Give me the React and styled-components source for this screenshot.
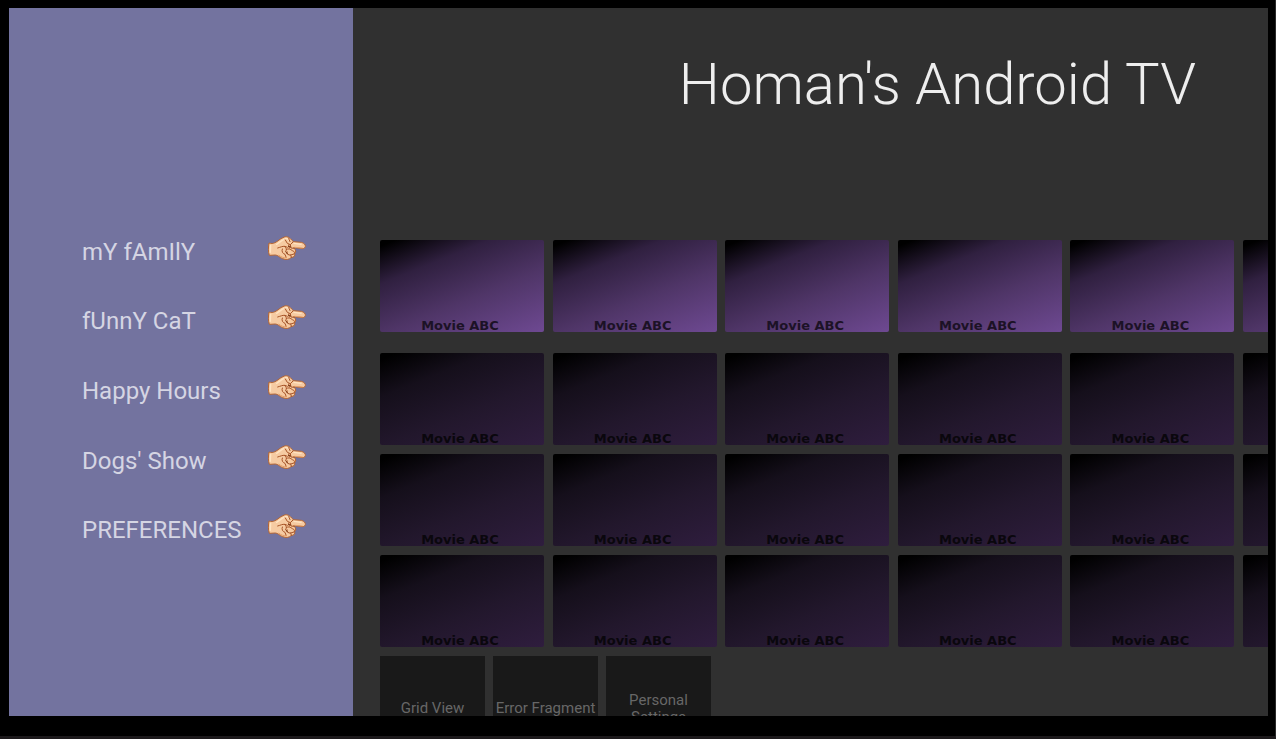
import React from "react";
import styled, { createGlobalStyle } from "styled-components";

const GlobalStyle = createGlobalStyle`
  *, *::before, *::after { box-sizing: border-box; }
  body {
    margin: 0;
    background: #000;
    font-family: Roboto, "Liberation Sans", sans-serif;
  }
`;

const Bezel = styled.div`
  display: flex;
  height: 100vh;
  padding: 8px 7px 20px 9px;
  background: #000;
  border-right: 1px solid #2a2a2a;
  border-bottom: 3px solid #1c191b;
`;

const Screen = styled.div`
  flex: 1;
  min-width: 0;
  display: flex;
  overflow: hidden;
  background: #303030;
`;

const Sidebar = styled.nav`
  flex: none;
  width: 344px;
  padding: 209px 47px 0 73px;
  background: #73739f;
`;

const Menu = styled.ul`
  display: grid;
  grid-auto-rows: 1fr;
  height: 348px;
  margin: 0;
  padding: 0;
  list-style: none;
`;

const MenuItem = styled.li`
  display: flex;
`;

const MenuButton = styled.button`
  flex: 1;
  display: flex;
  align-items: center;
  justify-content: space-between;
  padding: 0;
  border: 0;
  background: none;
  color: #d5d5e3;
  font: 400 24px/32px Roboto, "Liberation Sans", sans-serif;
  text-align: left;
  white-space: nowrap;
  cursor: pointer;
`;

const HandIcon = styled.svg`
  flex: none;
  width: 38px;
  height: 24px;
  margin-bottom: 8px;
`;

const Browse = styled.main`
  flex: 1;
  min-width: 0;
  overflow: hidden;
  padding-left: 27px;
`;

const Header = styled.header`
  height: 232px;
  padding: 40px 72px 0 0;
`;

const Title = styled.h1`
  margin: 0;
  color: #eee;
  font-size: 58px;
  font-weight: 300;
  line-height: 72px;
  text-align: right;
  white-space: nowrap;
`;

const MovieRow = styled.section`
  display: flex;
  justify-content: space-between;
  width: 1027px;
  margin-bottom: ${(p) => (p.$active ? 21 : 9)}px;
`;

const MovieCard = styled.button`
  flex: none;
  display: flex;
  align-items: flex-end;
  justify-content: center;
  width: 164px;
  height: 92px;
  padding: 0 4px 0 0;
  border: 0;
  border-radius: 2px;
  background: ${(p) =>
    p.$active
      ? "linear-gradient(158deg, #000 4%, #302040 28%, #4f3567 60%, #6e4992 100%)"
      : "linear-gradient(158deg, #000 4%, #150f1b 28%, #22172c 60%, #2f1d3e 100%)"};
  color: ${(p) => (p.$active ? "#1c1226" : "#0a070d")};
  font: 700 13px/12px "DejaVu Sans", sans-serif;
  cursor: pointer;
`;

const TileRow = styled.section`
  display: flex;
  gap: 8px;
`;

const Tile = styled.button`
  flex: none;
  width: 105px;
  height: 105px;
  padding: 0;
  border: 0;
  background: #191919;
  color: #676767;
  font: 400 15px/17px Roboto, "Liberation Sans", sans-serif;
  cursor: pointer;
`;

const menu = ["mY fAmIlY", "fUnnY CaT", "Happy Hours", "Dogs' Show", "PREFERENCES"];
const rows = ["Featured", "Family", "Cats", "Dogs"];
const tiles = ["Grid View", "Error Fragment", "Personal Settings"];
const cards = ["Movie ABC", "Movie ABC", "Movie ABC", "Movie ABC", "Movie ABC", ""];

function PointingHand() {
  return (
    <HandIcon viewBox="26 33 114 72" aria-hidden="true">
      <path
        d="M29 54 C35 56 41 56 47 53 C56 49 62 41 71 38 C77 34 86 34 92 40 C96 43 98 47 102 50 L126 52 C134 54 139 59 138 65 C136 71 130 72 123 70 L103 68 C110 75 111 81 106 86 C108 92 103 98 96 97 C91 104 79 105 70 101 C61 98 56 90 48 90 L30 91 C26 80 27 65 29 54 Z"
        fill="#f6cba2"
        stroke="#b56532"
        strokeWidth="3"
        strokeLinejoin="round"
      />
      <g fill="none" strokeLinecap="round" strokeLinejoin="round">
        <path d="M34 61 L33 82 M52 58 C59 54 66 47 74 43 M78 40 C86 39 87 43 91 48 M104 55 L125 58" stroke="#ffe4c2" strokeWidth="4" />
        <path d="M59 91 C65 96 72 99 81 98 M106 67 L129 69" stroke="#e3a06c" strokeWidth="3" />
        <path d="M55 69 C63 67 69 63 77 64 L84 67 M78 45 L84 55 L93 59 L101 51 M88 41 L92 50 M76 65 C82 70 83 73 79 79 M69 72 C66 79 70 86 77 88 L80 96 M82 73 C86 70 94 72 99 77 C106 79 107 84 104 87 L94 90 C87 91 82 87 83 80 M93 59 L95 69 L104 70 M94 90 L96 97 M88 60 L90 69" stroke="#a85528" strokeWidth="3" />
        <path d="M87 64 L94 66 M80 81 L84 87" stroke="#793614" strokeWidth="3" />
      </g>
    </HandIcon>
  );
}

export default function App() {
  return (
    <>
      <GlobalStyle />
      <Bezel>
        <Screen>
          <Sidebar aria-label="Categories">
            <Menu>
              {menu.map((label) => (
                <MenuItem key={label}>
                  <MenuButton type="button">
                    {label}
                    <PointingHand />
                  </MenuButton>
                </MenuItem>
              ))}
            </Menu>
          </Sidebar>
          <Browse>
            <Header>
              <Title>Homan's Android TV</Title>
            </Header>
            {rows.map((row, i) => (
              <MovieRow key={row} aria-label={row} $active={i === 0}>
                {cards.map((title, n) => (
                  <MovieCard key={n} type="button" aria-label={title || "Next movie"} $active={i === 0}>
                    {title}
                  </MovieCard>
                ))}
              </MovieRow>
            ))}
            <TileRow>
              {tiles.map((tile) => (
                <Tile key={tile} type="button">
                  {tile}
                </Tile>
              ))}
            </TileRow>
          </Browse>
        </Screen>
      </Bezel>
    </>
  );
}
